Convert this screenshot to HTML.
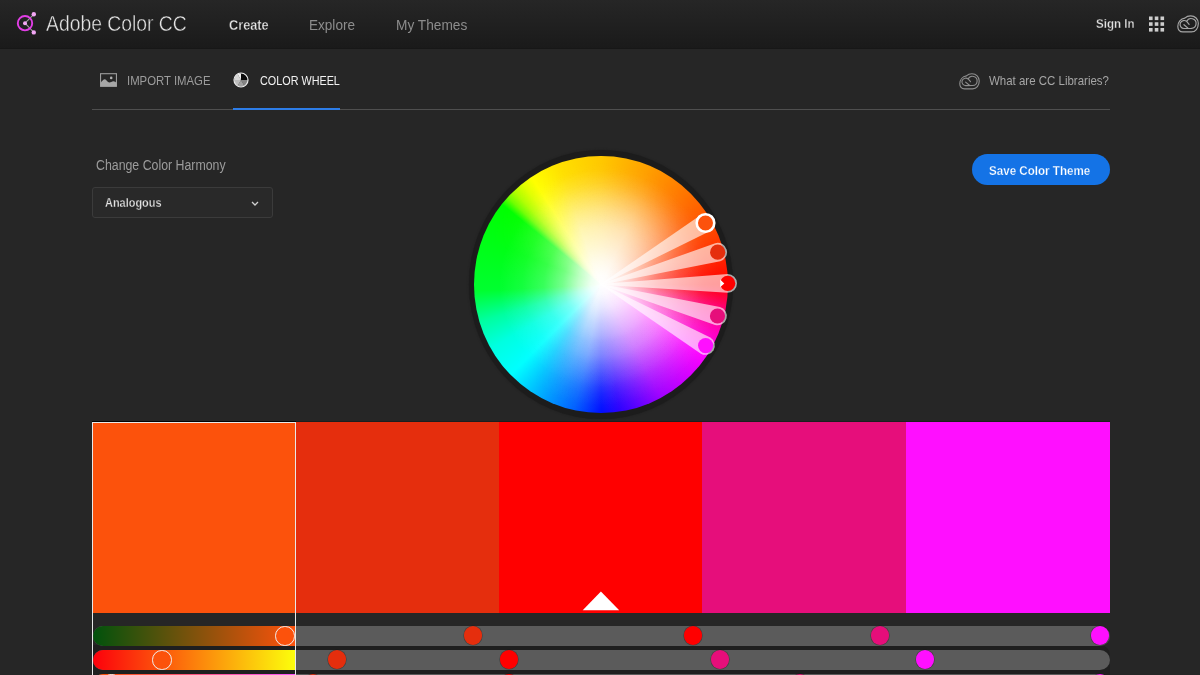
<!DOCTYPE html>
<html>
<head>
<meta charset="utf-8">
<style>
*{margin:0;padding:0;box-sizing:border-box;}
html,body{width:1200px;height:675px;overflow:hidden;background:#262626;font-family:"Liberation Sans",sans-serif;}
.abs{position:absolute;white-space:nowrap;line-height:1;transform-origin:0 0;}
#hdr{position:absolute;left:0;top:0;width:1200px;height:49px;background:linear-gradient(#262626,#1a1a1a);}
#hdrline{position:absolute;left:0;top:48px;width:1200px;height:1px;background:#171717;}
#divider{position:absolute;left:92px;top:109px;width:1018px;height:1px;background:#4f4f4f;}
#tabul{position:absolute;left:233px;top:108px;width:107px;height:2px;background:#2d7de8;}
#dd{position:absolute;left:92px;top:187px;width:181px;height:31px;border:1px solid #3b3b3b;border-radius:3px;background:#292929;}
#save{position:absolute;left:972px;top:154px;width:138px;height:31px;border-radius:16px;background:#1473e6;}
#wheelring{position:absolute;left:468.8px;top:150.2px;width:264.2px;height:269.2px;border-radius:50%;background:#1c1c1c;box-shadow:0 0 1.5px 0.5px #202020;}
#wheel{position:absolute;left:473.8px;top:155.6px;width:254.2px;height:257.9px;border-radius:50%;overflow:hidden;
 background:radial-gradient(closest-side,rgba(255,255,255,1) 0%,rgba(255,255,255,0.93) 8%,rgba(255,255,255,0.74) 18%,rgba(255,255,255,0.46) 30%,rgba(255,255,255,0.22) 45%,rgba(255,255,255,0.08) 62%,rgba(255,255,255,0) 80%),
 conic-gradient(from 90deg,#ff0000 0deg,#ff0080 12deg,#ff00ff 34deg,#a000ff 62deg,#3000ff 81deg,#0010ff 90deg,#0060ff 102deg,#00a0ff 116deg,#00ffff 135deg,#00ffe0 150deg,#00ffa0 163deg,#00ff30 177deg,#00ff00 219deg,#70ff00 223deg,#b0ff00 227deg,#e0ff00 232deg,#ffff00 237deg,#ffe000 251deg,#ffc800 270deg,#ffa000 292deg,#ff6000 323deg,#ff3000 344deg,#ff0000 360deg);}
#wheel2{position:absolute;left:473.8px;top:155.6px;width:254.2px;height:257.9px;border-radius:50%;
 background:radial-gradient(closest-side,rgba(255,255,255,0.5) 0%,rgba(255,255,255,0.4) 30%,rgba(255,255,255,0.25) 50%,rgba(255,255,255,0.12) 70%,rgba(255,255,255,0.03) 85%,rgba(255,255,255,0) 95%);
 -webkit-mask-image:conic-gradient(from 90deg,#000 0deg,#000 110deg,transparent 140deg,transparent 200deg,#000 235deg,#000 360deg);
 mask-image:conic-gradient(from 90deg,#000 0deg,#000 110deg,transparent 140deg,transparent 200deg,#000 235deg,#000 360deg);}
#wheel3{position:absolute;left:473.8px;top:155.6px;width:254.2px;height:257.9px;border-radius:50%;
 background:radial-gradient(closest-side,rgba(255,255,255,0.3) 0%,rgba(255,255,255,0.3) 40%,rgba(255,255,255,0.25) 55%,rgba(255,255,255,0.15) 70%,rgba(255,255,255,0.07) 85%,rgba(255,255,255,0) 100%);
 -webkit-mask-image:conic-gradient(from 90deg,transparent 0deg,#000 30deg,#000 100deg,transparent 125deg,transparent 360deg);
 mask-image:conic-gradient(from 90deg,transparent 0deg,#000 30deg,#000 100deg,transparent 125deg,transparent 360deg);}
#wheel4{position:absolute;left:473.8px;top:155.6px;width:254.2px;height:257.9px;border-radius:50%;
 background:radial-gradient(closest-side,rgba(255,255,255,0.45) 0%,rgba(255,255,255,0.45) 45%,rgba(255,255,255,0.3) 60%,rgba(255,255,255,0.12) 75%,rgba(255,255,255,0) 90%);
 -webkit-mask-image:conic-gradient(from 90deg,transparent 0deg,transparent 225deg,#000 250deg,#000 295deg,rgba(0,0,0,0.6) 320deg,transparent 350deg,transparent 360deg);
 mask-image:conic-gradient(from 90deg,transparent 0deg,transparent 225deg,#000 250deg,#000 295deg,rgba(0,0,0,0.6) 320deg,transparent 350deg,transparent 360deg);}
.sw{position:absolute;top:422px;height:191px;}
.track{position:absolute;height:19.5px;border-radius:10px;}
.dot{position:absolute;border-radius:50%;}
</style>
</head>
<body>
<div id="hdr"></div>
<div id="hdrline"></div>
<svg class="abs" style="left:0;top:0" width="60" height="48">
 <line x1="25" y1="23.2" x2="33.8" y2="14.3" stroke="#a0a0a0" stroke-width="1.1"/>
 <line x1="25" y1="23.2" x2="33.8" y2="32.4" stroke="#a0a0a0" stroke-width="1.1"/>
 <circle cx="25" cy="23.2" r="7.2" fill="none" stroke="#e23ee6" stroke-width="1.9"/>
 <circle cx="25" cy="23.2" r="2" fill="#f2a6f4"/>
 <circle cx="33.8" cy="14.3" r="2.2" fill="#f2a6f4"/>
 <circle cx="33.8" cy="32.4" r="2.2" fill="#f2a6f4"/>
</svg>
<svg class="abs" style="left:1149px;top:16px" width="16" height="16"><g fill="#cdcdcd"><rect x="0" y="0.5" width="3.6" height="3.6"/><rect x="5.75" y="0.5" width="3.6" height="3.6"/><rect x="11.5" y="0.5" width="3.6" height="3.6"/><rect x="0" y="6.25" width="3.6" height="3.6"/><rect x="5.75" y="6.25" width="3.6" height="3.6"/><rect x="11.5" y="6.25" width="3.6" height="3.6"/><rect x="0" y="12" width="3.6" height="3.6"/><rect x="5.75" y="12" width="3.6" height="3.6"/><rect x="11.5" y="12" width="3.6" height="3.6"/></g></svg>
<svg class="abs" style="left:1176.6px;top:14.6px" width="23.6" height="19.4" viewBox="-1 -1 23 19" preserveAspectRatio="none">
 <g fill="none" stroke="#a6a6a6" stroke-width="1.15" stroke-linecap="round">
 <path d="M4.6 15.6 C1.5 15.6 -0.2 13 -0.2 10.2 C-0.2 6 2.6 2.6 6.6 2 C8.2 0.5 10.2 -0.2 12.3 -0.2 C16.6 -0.2 19.8 3 19.8 7.4 C19.8 12 17 15.6 13 15.6 Z"/>
 <path d="M10.8 8.1 L8.6 5.5 A3.9 3.9 0 1 0 6 12.2 L13 12.1 A4.8 4.8 0 1 0 8.4 5.4"/>
 <path d="M5.8 8.5 L10 12.1"/>
 </g></svg>
<svg class="abs" style="left:100px;top:73px" width="17" height="14" viewBox="0 0 17 14">
 <rect x="0.55" y="0.7" width="15.9" height="12.6" fill="none" stroke="#9c9c9c" stroke-width="1.1"/>
 <path d="M0.5 13.5 L0.5 10 C2 8.2 3.3 6.3 4.8 6.3 C6.4 6.3 7.6 9.6 9.3 9.6 C10.8 9.6 11.8 8.3 13.4 8.3 C14.8 8.3 15.8 9.2 16.5 9.8 L16.5 13.5 Z" fill="#a6a6a6"/>
 <circle cx="11.2" cy="4.9" r="1.3" fill="#b0b0b0"/>
</svg>
<svg class="abs" style="left:233px;top:72px" width="16" height="16" viewBox="0 0 16 16"><path d="M8 8 L8.00 1.40 A6.6 6.6 0 0 1 14.60 8.00 Z" fill="#0a0a0a"/><path d="M8 8 L14.60 8.00 A6.6 6.6 0 0 1 11.30 13.72 Z" fill="#858585"/><path d="M8 8 L11.30 13.72 A6.6 6.6 0 0 1 4.70 13.72 Z" fill="#a2a2a2"/><path d="M8 8 L4.70 13.72 A6.6 6.6 0 0 1 1.40 8.00 Z" fill="#bdbdbd"/><path d="M8 8 L1.40 8.00 A6.6 6.6 0 0 1 4.70 2.28 Z" fill="#d6d6d6"/><path d="M8 8 L4.70 2.28 A6.6 6.6 0 0 1 8.00 1.40 Z" fill="#f2f2f2"/><circle cx="8" cy="8" r="7" fill="none" stroke="#ececec" stroke-width="1.2"/></svg>
<svg class="abs" style="left:958.7px;top:72.8px" width="22.4" height="18.2" viewBox="-1 -1 23 19" preserveAspectRatio="none">
 <g fill="none" stroke="#8e8e8e" stroke-width="1.15" stroke-linecap="round">
 <path d="M4.6 15.6 C1.5 15.6 -0.2 13 -0.2 10.2 C-0.2 6 2.6 2.6 6.6 2 C8.2 0.5 10.2 -0.2 12.3 -0.2 C16.6 -0.2 19.8 3 19.8 7.4 C19.8 12 17 15.6 13 15.6 Z"/>
 <path d="M10.8 8.1 L8.6 5.5 A3.9 3.9 0 1 0 6 12.2 L13 12.1 A4.8 4.8 0 1 0 8.4 5.4"/>
 <path d="M5.8 8.5 L10 12.1"/>
 </g></svg>
<div id="divider"></div>
<div id="tabul"></div>
<div id="dd"></div>
<svg class="abs" style="left:250.5px;top:201px" width="8" height="6"><path d="M1 1 L4 4 L7 1" fill="none" stroke="#cfcfcf" stroke-width="1.3"/></svg>
<div id="save"></div>
<div id="wheelring"></div>
<div id="wheel"></div>
<div id="wheel2"></div>
<div id="wheel3"></div>
<div id="wheel4"></div>
<svg class="abs" style="left:0;top:0" width="1200" height="675"><g opacity="0.62" fill="#fff"><path d="M601.10 284.74 L710.21 231.02 A9.3 9.3 0 0 0 700.79 214.98 L600.70 284.06 Z"/></g><g opacity="0.62" fill="#fff"><path d="M601.01 284.79 L720.17 261.17 A9.3 9.3 0 0 0 715.23 243.23 L600.79 284.01 Z"/></g><g opacity="0.62" fill="#fff"><path d="M600.90 284.80 L727.77 292.70 A9.3 9.3 0 0 0 727.63 274.10 L600.90 284.00 Z"/></g><g opacity="0.62" fill="#fff"><path d="M600.80 284.79 L715.07 324.98 A9.3 9.3 0 0 0 719.93 307.02 L601.00 284.01 Z"/></g><g opacity="0.62" fill="#fff"><path d="M600.70 284.75 L700.91 353.63 A9.3 9.3 0 0 0 710.29 337.57 L601.10 284.05 Z"/></g><circle cx="705.50" cy="223.00" r="8.8" fill="#fc520c" stroke="#fff" stroke-width="2.6"/><circle cx="717.70" cy="252.20" r="7.6" fill="#e52e0d"/><circle cx="727.70" cy="283.40" r="7.6" fill="#ff0000"/><path d="M720.10 279.60 L724.30 283.40 L720.10 287.20 Z" fill="#fff"/><circle cx="717.50" cy="316.00" r="7.6" fill="#e60e7b"/><circle cx="705.60" cy="345.60" r="7.6" fill="#ff0fff"/></svg>
<div class="sw" style="left:92px;width:204px;background:#fc520c;"></div>
<div class="sw" style="left:296px;width:203px;background:#e52e0d;"></div>
<div class="sw" style="left:499px;width:203px;background:#ff0000;"></div>
<div class="sw" style="left:702px;width:204px;background:#e60e7b;"></div>
<div class="sw" style="left:906px;width:204px;background:#ff0fff;"></div>
<svg class="abs" style="left:570px;top:580px" width="60" height="40"><path d="M12.7 30.3 L30.9 11.6 L49.2 30.3 Z" fill="#fff"/></svg>
<div style="position:absolute;left:92px;top:421px;width:204px;height:1px;background:#050505;"></div>
<div style="position:absolute;left:296px;top:421px;width:814px;height:1px;background:#1b1f1f;"></div>
<div style="position:absolute;left:93px;top:645px;width:1017px;height:30px;background:#1f1f1f;border-radius:0 10px 0 0;"></div>
<div class="track" style="left:93px;top:626px;width:1017px;background:#5b5b5b;"></div>
<div class="track" style="left:93px;top:650px;width:1017px;background:#5b5b5b;"></div>
<div class="track" style="left:93px;top:674px;width:1017px;background:#5b5b5b;"></div>
<div class="track" style="left:93px;top:626px;width:203px;border-radius:10px 0 0 10px;background:linear-gradient(90deg,rgb(0,82,12),rgb(255,82,12));"></div>
<div class="track" style="left:93px;top:650px;width:203px;border-radius:10px 0 0 10px;background:linear-gradient(90deg,rgb(252,0,12),rgb(252,255,12));"></div>
<div class="track" style="left:93px;top:674px;width:203px;border-radius:10px 0 0 10px;background:linear-gradient(90deg,rgb(252,82,0),rgb(252,82,255));"></div>
<div class="dot" style="left:275.25px;top:626.05px;width:19.5px;height:19.5px;background:#fc520c;border:1.8px solid #f0f0f0;"></div>
<div class="dot" style="left:152.25px;top:650.05px;width:19.5px;height:19.5px;background:#fc520c;border:1.8px solid #f0f0f0;"></div>
<div class="dot" style="left:101.95px;top:674.05px;width:19.5px;height:19.5px;background:#fc520c;border:1.8px solid #f0f0f0;"></div>
<div class="dot" style="left:463.60px;top:626.40px;width:18.8px;height:18.8px;background:#e52e0d;box-shadow:0 0 0 0.6px rgba(16,16,16,0.35);"></div>
<div class="dot" style="left:327.60px;top:650.40px;width:18.8px;height:18.8px;background:#e52e0d;box-shadow:0 0 0 0.6px rgba(16,16,16,0.35);"></div>
<div class="dot" style="left:303.60px;top:674.40px;width:18.8px;height:18.8px;background:#e52e0d;box-shadow:0 0 0 0.6px rgba(16,16,16,0.35);"></div>
<div class="dot" style="left:683.60px;top:626.40px;width:18.8px;height:18.8px;background:#ff0000;box-shadow:0 0 0 0.6px rgba(16,16,16,0.35);"></div>
<div class="dot" style="left:499.60px;top:650.40px;width:18.8px;height:18.8px;background:#ff0000;box-shadow:0 0 0 0.6px rgba(16,16,16,0.35);"></div>
<div class="dot" style="left:499.60px;top:674.40px;width:18.8px;height:18.8px;background:#ff0000;box-shadow:0 0 0 0.6px rgba(16,16,16,0.35);"></div>
<div class="dot" style="left:870.60px;top:626.40px;width:18.8px;height:18.8px;background:#e60e7a;box-shadow:0 0 0 0.6px rgba(16,16,16,0.35);"></div>
<div class="dot" style="left:710.60px;top:650.40px;width:18.8px;height:18.8px;background:#e60e7a;box-shadow:0 0 0 0.6px rgba(16,16,16,0.35);"></div>
<div class="dot" style="left:790.60px;top:674.40px;width:18.8px;height:18.8px;background:#e60e7a;box-shadow:0 0 0 0.6px rgba(16,16,16,0.35);"></div>
<div class="dot" style="left:1090.60px;top:626.40px;width:18.8px;height:18.8px;background:#ff0fff;box-shadow:0 0 0 0.6px rgba(16,16,16,0.35);"></div>
<div class="dot" style="left:915.60px;top:650.40px;width:18.8px;height:18.8px;background:#ff0fff;box-shadow:0 0 0 0.6px rgba(16,16,16,0.35);"></div>
<div class="dot" style="left:1090.60px;top:674.40px;width:18.8px;height:18.8px;background:#ff0fff;box-shadow:0 0 0 0.6px rgba(16,16,16,0.35);"></div>
<div style="position:absolute;left:92px;top:422px;width:204px;height:260px;border:1px solid #e8e8e8;border-bottom:none;"></div>
<div class="abs" style="left:46.00px;top:12.94px;font-size:22.5px;font-weight:400;color:#e4e4e4;-webkit-text-stroke:0.45px #202020;transform:scaleX(0.8589);">Adobe Color CC</div>
<div class="abs" style="left:229.00px;top:16.80px;font-size:15px;font-weight:700;color:#e8e8e8;-webkit-text-stroke:0.35px #1f1f1f;transform:scaleX(0.8478);">Create</div>
<div class="abs" style="left:308.90px;top:16.59px;font-size:15px;font-weight:400;color:#8c8c8c;transform:scaleX(0.9040);">Explore</div>
<div class="abs" style="left:395.79px;top:16.80px;font-size:15px;font-weight:400;color:#8c8c8c;transform:scaleX(0.9130);">My Themes</div>
<div class="abs" style="left:1096.25px;top:16.77px;font-size:13.5px;font-weight:700;color:#e2e2e2;-webkit-text-stroke:0.3px #1f1f1f;transform:scaleX(0.8545);">Sign In</div>
<div class="abs" style="left:126.63px;top:74.19px;font-size:13px;font-weight:400;color:#9c9c9c;transform:scaleX(0.8734);">IMPORT IMAGE</div>
<div class="abs" style="left:260.00px;top:74.09px;font-size:13px;font-weight:400;color:#f2f2f2;transform:scaleX(0.8313);">COLOR WHEEL</div>
<div class="abs" style="left:989.40px;top:73.77px;font-size:13.5px;font-weight:400;color:#a6a6a6;transform:scaleX(0.8504);">What are CC Libraries?</div>
<div class="abs" style="left:96.42px;top:158.34px;font-size:14px;font-weight:400;color:#9c9c9c;transform:scaleX(0.8815);">Change Color Harmony</div>
<div class="abs" style="left:104.70px;top:195.59px;font-size:13px;font-weight:700;color:#e4e4e4;-webkit-text-stroke:0.3px #2a2a2a;transform:scaleX(0.8418);">Analogous</div>
<div class="abs" style="left:989.11px;top:163.99px;font-size:13px;font-weight:700;color:#ffffff;-webkit-text-stroke:0.25px #1473e6;transform:scaleX(0.8929);">Save Color Theme</div>
</body>
</html>
